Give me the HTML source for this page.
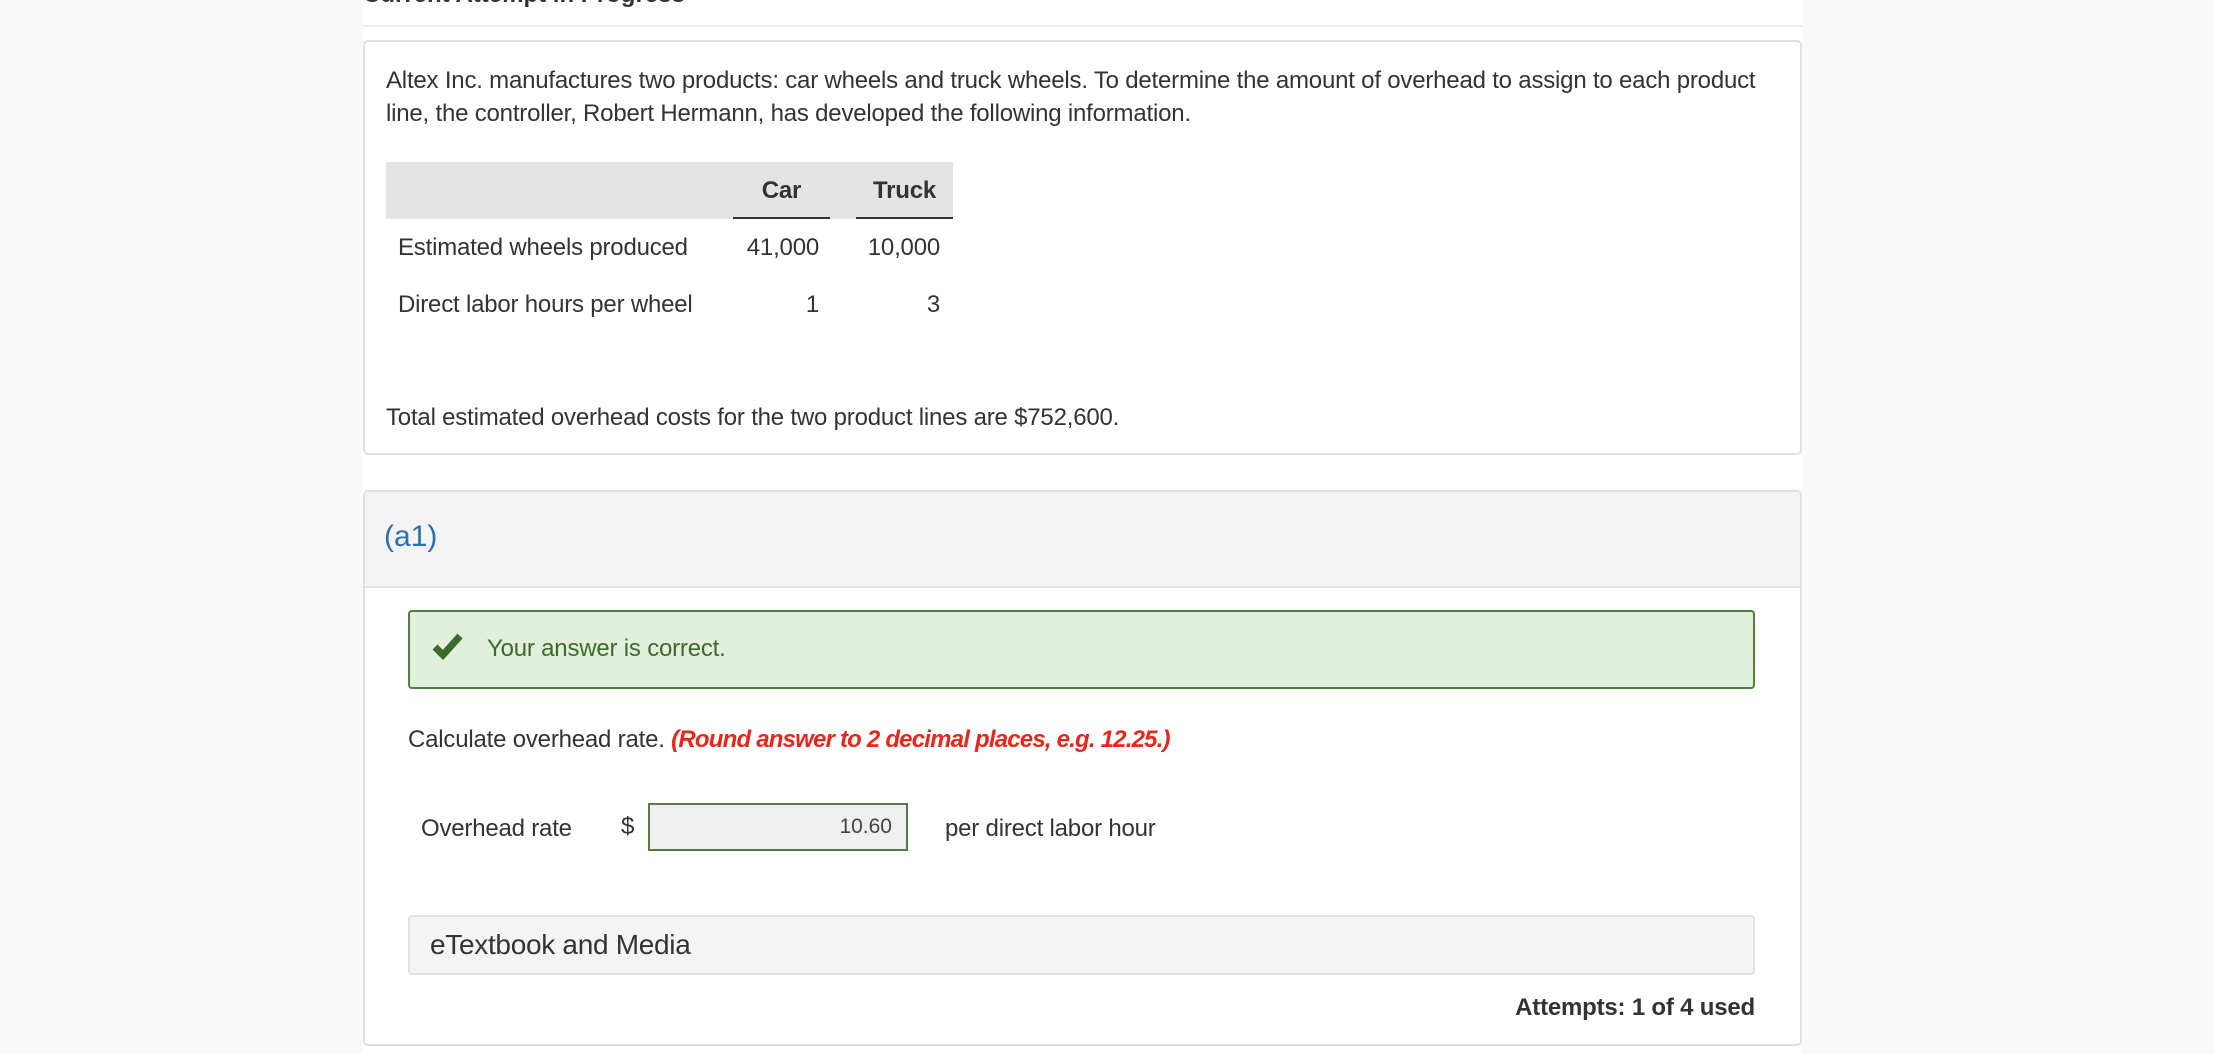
<!DOCTYPE html>
<html><head><meta charset="utf-8"><style>
*{margin:0;padding:0;box-sizing:border-box}
body{width:2214px;height:1054px;background:#f9f9f9;font-family:"Liberation Sans",sans-serif;color:#333;position:relative;overflow:hidden}
.col{position:absolute;left:363px;top:0;width:1439px;height:1054px;background:#fff}
.abs{position:absolute;white-space:nowrap}
.t{font-size:24px;letter-spacing:-0.2px}
</style></head><body>
<div class="col"></div>
<div class="abs" style="left:363px;top:-19px;font-size:24px;font-weight:bold;color:#333">Current Attempt in Progress</div>
<div class="abs" style="left:363px;top:25px;width:1439px;height:2px;background:#eee"></div>
<div class="abs" style="left:363px;top:40px;width:1439px;height:415px;border:2px solid #e0e0e0;border-radius:5px;background:#fff"></div>
<div class="abs t" style="left:386px;top:64px;line-height:33px">Altex Inc. manufactures two products: car wheels and truck wheels. To determine the amount of overhead to assign to each product<br>line, the controller, Robert Hermann, has developed the following information.</div>
<div class="abs" style="left:386px;top:162px;width:567px;height:57px;background:#e4e4e4"></div>
<div class="abs" style="left:733px;top:217px;width:97px;height:2px;background:#333"></div>
<div class="abs" style="left:856px;top:217px;width:97px;height:2px;background:#333"></div>
<div class="abs t" style="left:733px;width:97px;top:177px;text-align:center;font-weight:bold">Car</div>
<div class="abs t" style="left:856px;width:97px;top:177px;text-align:center;font-weight:bold">Truck</div>
<div class="abs t" style="left:398px;top:234px">Estimated wheels produced</div>
<div class="abs t" style="left:700px;width:119px;top:234px;text-align:right">41,000</div>
<div class="abs t" style="left:820px;width:120px;top:234px;text-align:right">10,000</div>
<div class="abs t" style="left:398px;top:291px">Direct labor hours per wheel</div>
<div class="abs t" style="left:700px;width:119px;top:291px;text-align:right">1</div>
<div class="abs t" style="left:820px;width:120px;top:291px;text-align:right">3</div>
<div class="abs t" style="left:386px;top:404px">Total estimated overhead costs for the two product lines are $752,600.</div>

<div class="abs" style="left:363px;top:490px;width:1439px;height:556px;border:2px solid #e0e0e0;border-radius:5px;background:#fff;overflow:hidden">
 <div style="height:96px;background:#f4f4f4;border-bottom:2px solid #e2e2e2"></div>
</div>
<div class="abs" style="left:384px;top:520px;font-size:30px;color:#2a6fb0">(a1)</div>
<div class="abs" style="left:408px;top:610px;width:1347px;height:79px;background:#e2efdb;border:2px solid #4f7f40;border-radius:4px"></div>
<svg class="abs" style="left:432px;top:632px" width="32" height="28" viewBox="0 0 32 28"><path d="M3 15 L11 23 L28 4" fill="none" stroke="#3d6b2d" stroke-width="7"/></svg>
<div class="abs t" style="left:487px;top:635px;color:#3e6a2c">Your answer is correct.</div>
<div class="abs t" style="left:408px;top:726px">Calculate overhead rate. <span style="color:#e8261c;font-weight:bold;font-style:italic;letter-spacing:-0.8px">(Round answer to 2 decimal places, e.g. 12.25.)</span></div>
<div class="abs t" style="left:421px;top:815px">Overhead rate</div>
<div class="abs t" style="left:621px;top:813px">$</div>
<div class="abs" style="left:648px;top:803px;width:260px;height:48px;background:#efefef;border:2px solid #5a7a4a"></div>
<div class="abs" style="left:648px;width:244px;top:815px;text-align:right;font-size:21px;color:#444">10.60</div>
<div class="abs t" style="left:945px;top:815px">per direct labor hour</div>
<div class="abs" style="left:408px;top:915px;width:1347px;height:60px;background:#f4f4f4;border:2px solid #e2e2e2;border-radius:4px"></div>
<div class="abs" style="left:430px;top:929px;font-size:28px;letter-spacing:-0.3px">eTextbook and Media</div>
<div class="abs t" style="right:459px;top:994px;font-weight:bold">Attempts: 1 of 4 used</div>
</body></html>
